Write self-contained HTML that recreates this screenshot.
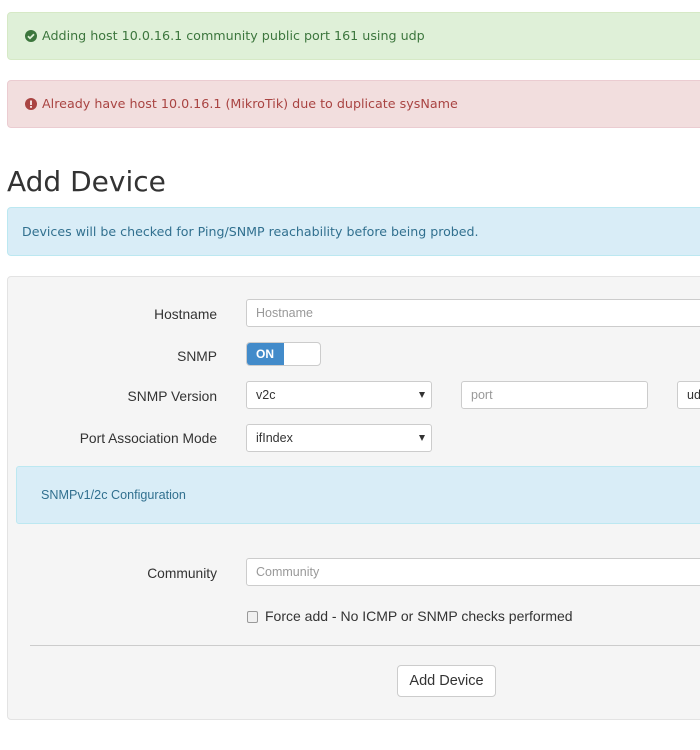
<!DOCTYPE html>
<html><head><style>
*{box-sizing:border-box;margin:0;padding:0}
html,body{width:700px;height:750px;overflow:hidden;background:#fff;font-family:"DejaVu Sans","Liberation Sans",sans-serif;}
.a{position:absolute}
.alert{position:absolute;left:7px;width:720px;border:1px solid;border-radius:4px;font-size:12.7px;}
.lbl{position:absolute;right:483px;font-family:"Liberation Sans",sans-serif;font-size:13.8px;color:#333;text-align:right;white-space:nowrap}
.inp{position:absolute;background:#fff;border:1px solid #ccc;border-radius:3px;font-family:"Liberation Sans",sans-serif;font-size:12.5px;color:#999;padding-left:9px;display:flex;align-items:center}
.sel{color:#333}
.arr{position:absolute;right:6px;top:10px;width:0;height:0;border-left:3px solid transparent;border-right:3px solid transparent;border-top:6px solid #333}
</style></head><body>
<div class="alert" style="top:12px;height:48px;background:#dff0d8;border-color:#d6e9c6;color:#3c763d">
<svg class="a" style="left:17px;top:17px" width="12" height="12" viewBox="0 0 12 12"><circle cx="6" cy="6" r="6" fill="#3c763d"/><path d="M3 6.2l2 2 4-4" stroke="#dff0d8" stroke-width="1.8" fill="none"/></svg>
<span class="a" style="left:34px;top:15px">Adding host 10.0.16.1 community public port 161 using udp</span></div>
<div class="alert" style="top:80px;height:48px;background:#f2dede;border-color:#ebccd1;color:#a94442">
<svg class="a" style="left:17px;top:17px" width="12" height="12" viewBox="0 0 12 12"><circle cx="6" cy="6" r="6" fill="#a94442"/><rect x="5" y="2.5" width="2" height="4.5" fill="#f2dede"/><rect x="5" y="8" width="2" height="1.8" fill="#f2dede"/></svg>
<span class="a" style="left:34px;top:15px">Already have host 10.0.16.1 (MikroTik) due to duplicate sysName</span></div>
<div class="a" style="left:7px;top:165px;font-size:28px;color:#333;font-family:'DejaVu Sans',sans-serif">Add Device</div>
<div class="alert" style="top:207px;height:49px;background:#d9edf7;border-color:#bce8f1;color:#31708f;font-size:12.6px"><span class="a" style="left:14px;top:16px">Devices will be checked for Ping/SNMP reachability before being probed.</span></div>
<div class="a" style="left:7px;top:276px;width:720px;height:444px;background:#f5f5f5;border:1px solid #e3e3e3;border-radius:4px"></div>
<div class="lbl" style="top:307px">Hostname</div>
<div class="inp" style="left:246px;top:299px;width:480px;height:28px">Hostname</div>
<div class="lbl" style="top:349px">SNMP</div>
<div class="a" style="left:246px;top:342px;width:75px;height:24px;border:1px solid #ccc;border-radius:4px;background:#fff;overflow:hidden"><div style="width:37px;height:100%;background:#428bca;color:#fff;font-family:'Liberation Sans',sans-serif;font-weight:bold;font-size:12px;line-height:22px;padding-left:9px">ON</div></div>
<div class="lbl" style="top:389px">SNMP Version</div>
<div class="inp sel" style="left:246px;top:381px;width:186px;height:28px">v2c<span class="arr"></span></div>
<div class="inp" style="left:461px;top:381px;width:187px;height:28px">port</div>
<div class="inp sel" style="left:677px;top:381px;width:60px;height:28px">udp</div>
<div class="lbl" style="top:431px">Port Association Mode</div>
<div class="inp sel" style="left:246px;top:424px;width:186px;height:28px">ifIndex<span class="arr"></span></div>
<div class="a" style="left:16px;top:466px;width:720px;height:58px;background:#d9edf7;border:1px solid #bce8f1;border-radius:3px;color:#31708f;font-family:'Liberation Sans',sans-serif;font-size:12.6px"><span class="a" style="left:24px;top:21px">SNMPv1/2c Configuration</span></div>
<div class="lbl" style="top:566px">Community</div>
<div class="inp" style="left:246px;top:558px;width:480px;height:28px">Community</div>
<div class="a" style="left:247px;top:611px;width:11px;height:12px;border:1px solid #999;border-radius:2px;background:#f0f0f0"></div>
<div class="a" style="left:265px;top:608px;font-family:'Liberation Sans',sans-serif;font-size:14px;color:#333">Force add - No ICMP or SNMP checks performed</div>
<div class="a" style="left:30px;top:645px;width:680px;height:1px;background:#ccc"></div>
<div class="a" style="left:397px;top:665px;width:99px;height:32px;border:1px solid #ccc;border-radius:4px;background:#fff;font-family:'Liberation Sans',sans-serif;font-size:14.5px;color:#333;text-align:center;line-height:30px">Add Device</div>
</body></html>
